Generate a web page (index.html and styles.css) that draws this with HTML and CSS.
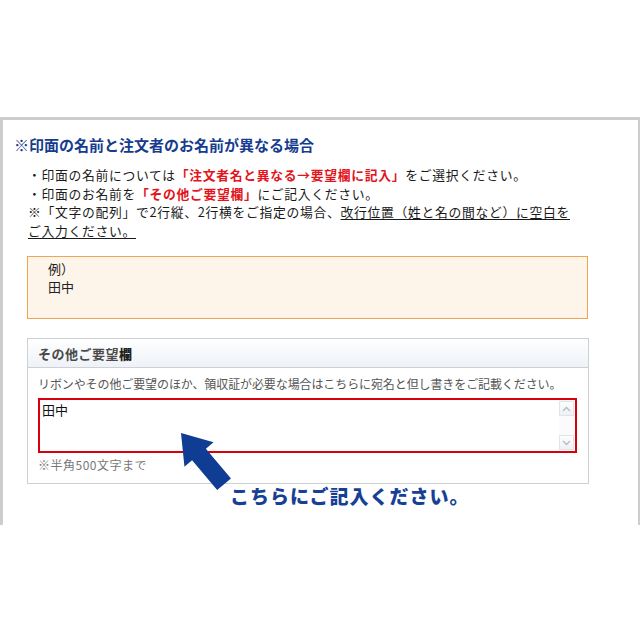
FILE: index.html
```html
<!DOCTYPE html>
<html lang="ja">
<head>
    <meta charset="UTF-8">
    <meta name="viewport" content="width=device-width, initial-scale=1.0">
    <title>印面の名前について</title>
    <link rel="stylesheet" href="styles.css">
</head>
<body>
    <div class="frame">
        <h2 class="title">※印面の名前と注文者のお名前が異なる場合</h2>

        <ul class="notes">
            <li>・印面の名前については<strong class="red">「注文者名と異なる→要望欄に記入」</strong>をご選択ください。</li>
            <li>・印面のお名前を<strong class="red">「その他ご要望欄」</strong>にご記入ください。</li>
            <li>※「文字の配列」で2行縦、2行横をご指定の場合、<u>改行位置（姓と名の間など）に空白を</u><br><u>ご入力ください。</u></li>
        </ul>

        <!-- example of what to write -->
        <div class="sample">
            <p>例）</p>
            <p>田中</p>
        </div>

        <div class="request">
            <div class="request-head">その他ご要望<b>欄</b></div>
            <div class="request-body">
                <p class="hint">リボンやその他ご要望のほか、領収証が必要な場合はこちらに宛名と但し書きをご記載ください。</p>
                <div class="request-input">
                    <textarea>田中</textarea>
                    <div class="scrollbar">
                        <span class="scroll-btn">
                            <svg width="9" height="6" viewBox="0 0 9 6"><path d="M1 5 L4.5 1.5 L8 5" fill="none" stroke="#b4bcc6" stroke-width="1.4"/></svg>
                        </span>
                        <span class="scroll-btn">
                            <svg width="9" height="6" viewBox="0 0 9 6"><path d="M1 1 L4.5 4.5 L8 1" fill="none" stroke="#b4bcc6" stroke-width="1.4"/></svg>
                        </span>
                    </div>
                </div>
                <p class="limit">※半角500文字まで</p>
            </div>
        </div>

        <p class="callout">こちらにご記入ください。</p>

        <!-- big arrow pointing at the textarea -->
        <svg class="pointer" width="72" height="90" viewBox="0 0 72 90">
            <polygon transform="translate(10 5) rotate(-40)"
                     points="0,0 19,28 9,28 9,67 -9,67 -9,28 -19,28"
                     fill="#0f3d93"/>
        </svg>
    </div>
</body>
</html>
```

FILE: styles.css
```css
* {
    margin: 0;
    padding: 0;
    box-sizing: border-box;
}

body {
    font-family: 'Noto Sans CJK JP', 'Liberation Sans', sans-serif;
    background: #ffffff;
    color: #222;
    padding-top: 117px;
}

.frame {
    position: relative;
    width: 640px;
    height: 408px;
    border: 3px solid #cdcdcd;
    border-bottom: none;
    border-right-width: 2px;
    padding: 15px 0 0 11px;
}

.title {
    font-size: 15px;
    line-height: 20px;
    font-weight: bold;
    color: #163c8e;
}

.notes {
    list-style: none;
    margin: 11px 0 0 14px;
    font-size: 12.8px;
    line-height: 18.6px;
    letter-spacing: 0.7px;
    color: #1a1a1a;
}

.notes .red {
    color: #e3141c;
    font-weight: bold;
}

.notes u {
    text-underline-offset: 2px;
}

.sample {
    width: 561px;
    height: 63px;
    margin: 16px 0 0 13px;
    padding: 3px 20px 0;
    background: #fdf4ea;
    border: 1px solid #f0a552;
    font-size: 13px;
    line-height: 18px;
    color: #222;
}

.request {
    width: 562px;
    margin: 19px 0 0 13px;
    border: 1px solid #cdd0d4;
}

.request-head {
    height: 29px;
    padding-left: 10px;
    background: linear-gradient(#ffffff, #eef2f7);
    border-bottom: 1px solid #cdd0d4;
    font-size: 13px;
    line-height: 29px;
    letter-spacing: 0.5px;
    font-weight: bold;
    color: #4a4a4a;
}

.request-head b {
    color: #222;
    font-weight: 900;
}

.request-body {
    padding: 7px 0 9px 10px;
}

.hint {
    font-size: 12px;
    line-height: 18px;
    color: #555;
    letter-spacing: -0.1px;
}

.request-input {
    display: flex;
    width: 539px;
    height: 55px;
    margin-top: 5px;
    border: 2px solid #d9000d;
}

.request-input textarea {
    flex: 1;
    padding: 1px 2px;
    border: none;
    font-family: 'Noto Sans CJK JP', 'Liberation Sans', sans-serif;
    font-size: 13px;
    line-height: 18px;
    color: #111;
    resize: none;
    overflow: hidden;
}

/* old-style scrollbar with arrow buttons */
.scrollbar {
    width: 16px;
    display: flex;
    flex-direction: column;
    justify-content: space-between;
    padding: 1px 1px 1px 0;
    background: #fbfbfc;
}

.scroll-btn {
    height: 15px;
    display: flex;
    align-items: center;
    justify-content: center;
    border: 1px solid #e1e5ea;
    background: linear-gradient(#fdfdfd, #eef1f4);
}

.limit {
    margin-top: 3px;
    font-size: 12px;
    line-height: 18px;
    letter-spacing: 0.5px;
    color: #777;
}

.callout {
    margin: 0 0 0 216px;
    font-size: 19px;
    line-height: 24px;
    letter-spacing: 1px;
    font-weight: 900;
    color: #173f96;
}

.pointer {
    position: absolute;
    left: 168px;
    top: 308px;
}
```
